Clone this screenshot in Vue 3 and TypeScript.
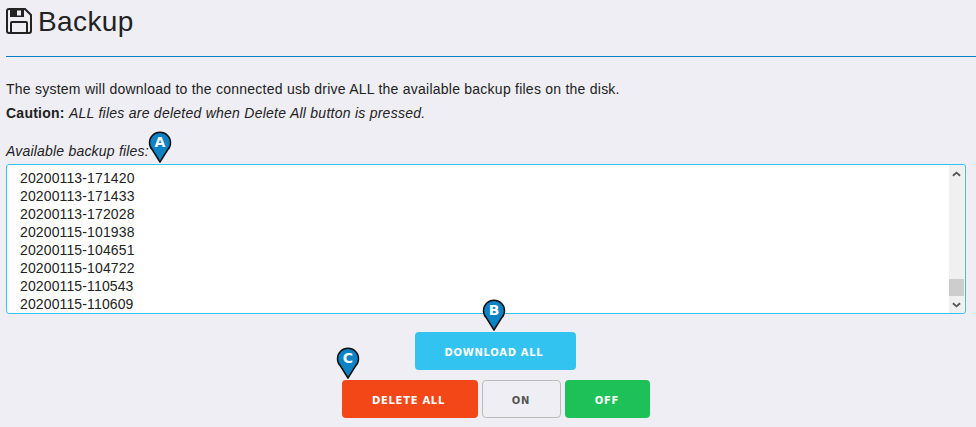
<script setup lang="ts">
const files = [
  '20200113-171420',
  '20200113-171433',
  '20200113-172028',
  '20200115-101938',
  '20200115-104651',
  '20200115-104722',
  '20200115-110543',
  '20200115-110609',
]
</script>

<template>
  <div class="page">
    <header class="title">
      <svg class="save-icon" viewBox="0 0 26 26" width="26" height="26">
        <path d="M1 3a2 2 0 0 1 2-2h16l6 6v16a2 2 0 0 1-2 2H3a2 2 0 0 1-2-2z" fill="none" stroke="#222" stroke-width="2" />
        <path d="M4 1h14v8H4z" fill="#222" />
        <path d="M11 2.500h4v5h-4z" fill="#eeeef4" />
        <path d="M5 24v-9a1 1 0 0 1 1-1h14a1 1 0 0 1 1 1v9" fill="none" stroke="#222" stroke-width="2" />
      </svg>
      <h1>Backup</h1>
    </header>

    <p class="intro">The system will download to the connected usb drive ALL the available backup files on the disk.</p>
    <p class="caution"><b>Caution:</b> <i>ALL files are deleted when Delete All button is pressed.</i></p>

    <div class="label-row">
      <label>Available backup files:</label>
      <svg class="pin pin-a" viewBox="0 0 24 32" width="24" height="32">
        <path d="M12 31 4.500 19A10.500 10.500 0 1 1 19.500 19z" fill="#0d83c6" stroke="#111" stroke-width="1.500" />
        <text x="12" y="16" class="pin-text">A</text>
      </svg>
    </div>

    <div class="list">
      <ul>
        <li v-for="f in files" :key="f">{{ f }}</li>
      </ul>
      <div class="scrollbar">
        <svg viewBox="0 0 10 6" width="9" height="6"><path d="M1 5l4-3.500L9 5" fill="none" stroke="#555" stroke-width="2" /></svg>
        <div class="track"><div class="thumb"></div></div>
        <svg viewBox="0 0 10 6" width="9" height="6"><path d="M1 1l4 3.500L9 1" fill="none" stroke="#555" stroke-width="2" /></svg>
      </div>
    </div>

    <div class="actions">
      <div class="btn-wrap">
        <svg class="pin pin-b" viewBox="0 0 24 32" width="24" height="32">
          <path d="M12 31 4.500 19A10.500 10.500 0 1 1 19.500 19z" fill="#0d83c6" stroke="#111" stroke-width="1.500" />
          <text x="12" y="16" class="pin-text">B</text>
        </svg>
        <button class="btn download">DOWNLOAD ALL</button>
      </div>
      <div class="row">
        <div class="btn-wrap">
          <svg class="pin pin-c" viewBox="0 0 24 32" width="24" height="32">
            <path d="M12 31 4.500 19A10.500 10.500 0 1 1 19.500 19z" fill="#0d83c6" stroke="#111" stroke-width="1.500" />
            <text x="12" y="16" class="pin-text">C</text>
          </svg>
          <button class="btn delete">DELETE ALL</button>
        </div>
        <button class="btn on">ON</button>
        <button class="btn off">OFF</button>
      </div>
    </div>
  </div>
</template>

<style>
html,
body {
  margin: 0;
  background: #eeeef4;
}
</style>

<style scoped>
.page {
  height: 427px;
  overflow: hidden;
  padding-left: 6px;
  box-sizing: border-box;
  font-family: "Liberation Sans", Arial, sans-serif;
  color: #222;
}

.title {
  display: flex;
  align-items: center;
  gap: 6px;
  height: 57px;
  padding-bottom: 14px;
  box-sizing: border-box;
  border-bottom: 1px solid #0080c8;
}

.save-icon {
  flex: none;
}

h1 {
  margin: 2px 0 0;
  font-size: 28px;
  font-weight: 400;
  letter-spacing: 0.4px;
}

.intro {
  margin: 24px 0 0;
  font-size: 14px;
  line-height: 16px;
  letter-spacing: 0.24px;
}

.caution {
  margin: 8px 0 0;
  font-size: 14px;
  line-height: 16px;
  letter-spacing: 0.25px;
}

.label-row {
  position: relative;
  margin-top: 22px;
  height: 16px;
  font-size: 14px;
  line-height: 16px;
  font-style: italic;
  letter-spacing: 0.2px;
}

.list {
  display: flex;
  width: 960px;
  height: 150px;
  margin-top: 5px;
  box-sizing: border-box;
  border: 1px solid #33c3f0;
  border-radius: 3px;
  background: #fff;
  overflow: hidden;
}

ul {
  flex: 1;
  margin: 0;
  padding: 4px 0 0 13px;
  list-style: none;
  font-size: 14px;
  line-height: 18px;
  letter-spacing: 0.13px;
  overflow: hidden;
}

.scrollbar {
  width: 15px;
  margin-right: 1px;
  display: flex;
  flex-direction: column;
  align-items: center;
  background: #f0f0f0;
  padding: 6px 0 5px;
  box-sizing: border-box;
}

.track {
  flex: 1;
  width: 100%;
  display: flex;
  flex-direction: column;
  justify-content: flex-end;
  padding-bottom: 6px;
}

.thumb {
  height: 17px;
  background: #cdcdcd;
}

.actions {
  display: flex;
  flex-direction: column;
  align-items: center;
  gap: 10px;
  margin-top: 18px;
  padding-left: 9px;
}

.row {
  display: flex;
  gap: 4px;
}

.btn-wrap {
  position: relative;
  display: flex;
}

.btn {
  height: 38px;
  padding: 2px 0 0;
  border: none;
  border-radius: 4px;
  font-family: "DejaVu Sans", Verdana, sans-serif;
  font-size: 10px;
  font-weight: 700;
  letter-spacing: 0.7px;
  color: #fff;
}

.download {
  width: 161px;
  padding-right: 3px;
  background: #33c3f0;
}

.delete {
  width: 136px;
  padding-right: 2px;
  background: #f44717;
}

.on {
  width: 79px;
  box-sizing: border-box;
  background: #eeeef4;
  border: 1px solid #bbb;
  color: #555;
}

.off {
  width: 85px;
  background: #1dc158;
}

.pin {
  position: absolute;
}

.pin-a {
  left: 142px;
  top: -12px;
}

.pin-b {
  left: 67px;
  top: -33px;
}

.pin-c {
  left: -6px;
  top: -33px;
}

.pin-text {
  font-family: "DejaVu Sans", sans-serif;
  font-size: 14px;
  font-weight: 700;
  font-style: normal;
  letter-spacing: 0;
  fill: #fff;
  text-anchor: middle;
}
</style>
